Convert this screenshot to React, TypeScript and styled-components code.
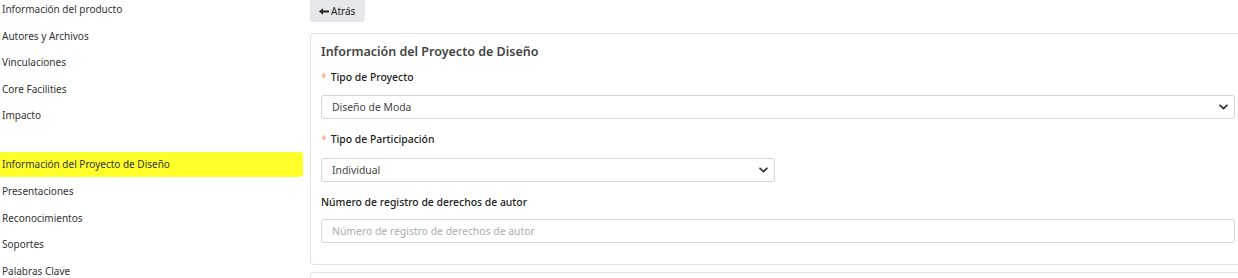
import styled, { createGlobalStyle } from 'styled-components';

const GlobalStyle = createGlobalStyle`
  html, body {
    margin: 0;
    padding: 0;
    background: #ffffff;
    overflow: hidden;
  }
  body {
    font-family: 'Noto Sans', 'Open Sans', sans-serif;
    color: #333;
  }
`;

const topItems = [
  'Información del producto',
  'Autores y Archivos',
  'Vinculaciones',
  'Core Facilities',
  'Impacto',
];

const bottomItems = ['Presentaciones', 'Reconocimientos', 'Soportes', 'Palabras Clave'];

const Chevron = () => (
  <svg width="11" height="11" viewBox="0 0 16 16" aria-hidden="true">
    <path
      d="M3 5.5l5 5 5-5"
      fill="none"
      stroke="#343a40"
      strokeWidth="2.6"
      strokeLinecap="round"
      strokeLinejoin="round"
    />
  </svg>
);

const ArrowLeft = () => (
  <svg width="10" height="7" viewBox="0 0 10 7" aria-hidden="true">
    <path d="M0 3.5L4 0.3v2.2h6v2H4v2.2z" fill="#222" />
  </svg>
);

const App = () => {
  return (
    <>
      <GlobalStyle />
      <Page>
        <Sidebar>
          {topItems.map((item) => (
            <NavItem key={item}>{item}</NavItem>
          ))}
          <NavSpacer />
          <NavItem $active>Información del Proyecto de Diseño</NavItem>
          {bottomItems.map((item) => (
            <NavItem key={item}>{item}</NavItem>
          ))}
        </Sidebar>
        <Main>
          <BackButton type="button">
            <ArrowLeft />
            Atrás
          </BackButton>
          <Card>
            <CardTitle>Información del Proyecto de Diseño</CardTitle>
            <Field>
              <Label>
                <Required>*</Required>Tipo de Proyecto
              </Label>
              <SelectWrap>
                <Select defaultValue="moda">
                  <option value="moda">Diseño de Moda</option>
                </Select>
                <ChevronSlot>
                  <Chevron />
                </ChevronSlot>
              </SelectWrap>
            </Field>
            <Field>
              <Label>
                <Required>*</Required>Tipo de Participación
              </Label>
              <SelectWrap $half>
                <Select defaultValue="individual">
                  <option value="individual">Individual</option>
                </Select>
                <ChevronSlot>
                  <Chevron />
                </ChevronSlot>
              </SelectWrap>
            </Field>
            <Field $last>
              <Label>Número de registro de derechos de autor</Label>
              <Input placeholder="Número de registro de derechos de autor" />
            </Field>
          </Card>
          <Card />
        </Main>
      </Page>
    </>
  );
};
export default App;

const Page = styled.div`
  display: flex;
  width: 1238px;
  height: 278px;
  overflow: hidden;
`;

const Sidebar = styled.nav`
  width: 303px;
  flex-shrink: 0;
  display: flex;
  flex-direction: column;
  margin-top: -4px;
`;

const NavItem = styled.div<{ $active?: boolean }>`
  flex-shrink: 0;
  height: ${(p) => (p.$active ? '25px' : '26.5px')};
  line-height: ${(p) => (p.$active ? '25px' : '26.5px')};
  margin-bottom: ${(p) => (p.$active ? '1px' : '0')};
  padding-left: 2px;
  font-size: 10px;
  color: #333;
  white-space: nowrap;
  background: ${(p) => (p.$active ? '#ffff2a' : 'transparent')};
  border-radius: ${(p) => (p.$active ? '0 3px 3px 0' : '0')};
`;

const NavSpacer = styled.div`
  flex-shrink: 0;
  height: 23.5px;
`;

const Main = styled.main`
  flex: 1;
  padding-left: 7px;
  display: flex;
  flex-direction: column;
  gap: 7px;
  margin-top: -8px;
  min-width: 0;
`;

const BackButton = styled.button`
  flex-shrink: 0;
  align-self: flex-start;
  height: 30px;
  width: 55px;
  padding: 8px 0 0 9px;
  background: #e5e7ea;
  border: none;
  border-radius: 3px;
  font-family: inherit;
  font-size: 10px;
  color: #222;
  display: flex;
  align-items: center;
  gap: 2px;
  margin-bottom: 4px;
`;

const Card = styled.section`
  flex-shrink: 0;
  border: 1px solid #e3e3e3;
  border-right: none;
  border-radius: 4px 0 0 4px;
  padding: 9px 3px 21px 10px;
  display: flex;
  flex-direction: column;
  gap: 13px;
  min-height: 40px;
`;

const CardTitle = styled.h2`
  margin: 0 0 -4.5px 0;
  font-size: 12.5px;
  font-weight: 600;
  color: #444;
  line-height: 18px;
`;

const Field = styled.div<{ $last?: boolean }>`
  display: flex;
  flex-direction: column;
  gap: ${(p) => (p.$last ? '9px' : '10.5px')};
`;

const Label = styled.label`
  font-size: 10.4px;
  font-weight: 500;
  color: #222;
  line-height: 15px;
`;

const Required = styled.span`
  color: #f6a48a;
  margin-right: 4px;
`;

const SelectWrap = styled.div<{ $half?: boolean }>`
  position: relative;
  width: ${(p) => (p.$half ? '454px' : '100%')};
`;

const Select = styled.select`
  width: 100%;
  height: 24px;
  border: 1px solid #d3d6da;
  border-radius: 3px;
  background: #fff;
  font-family: inherit;
  font-size: 10.4px;
  color: #444;
  padding: 0 10px;
  appearance: none;
  display: block;
`;

const ChevronSlot = styled.span`
  position: absolute;
  right: 6px;
  top: 50%;
  transform: translateY(-50%);
  display: flex;
  pointer-events: none;
`;

const Input = styled.input`
  height: 24px;
  box-sizing: border-box;
  width: 100%;
  border: 1px solid #d3d6da;
  border-radius: 3px;
  font-family: inherit;
  font-size: 10.4px;
  padding: 0 10px;
  color: #444;

  &::placeholder {
    color: #a8adb3;
  }
`;
